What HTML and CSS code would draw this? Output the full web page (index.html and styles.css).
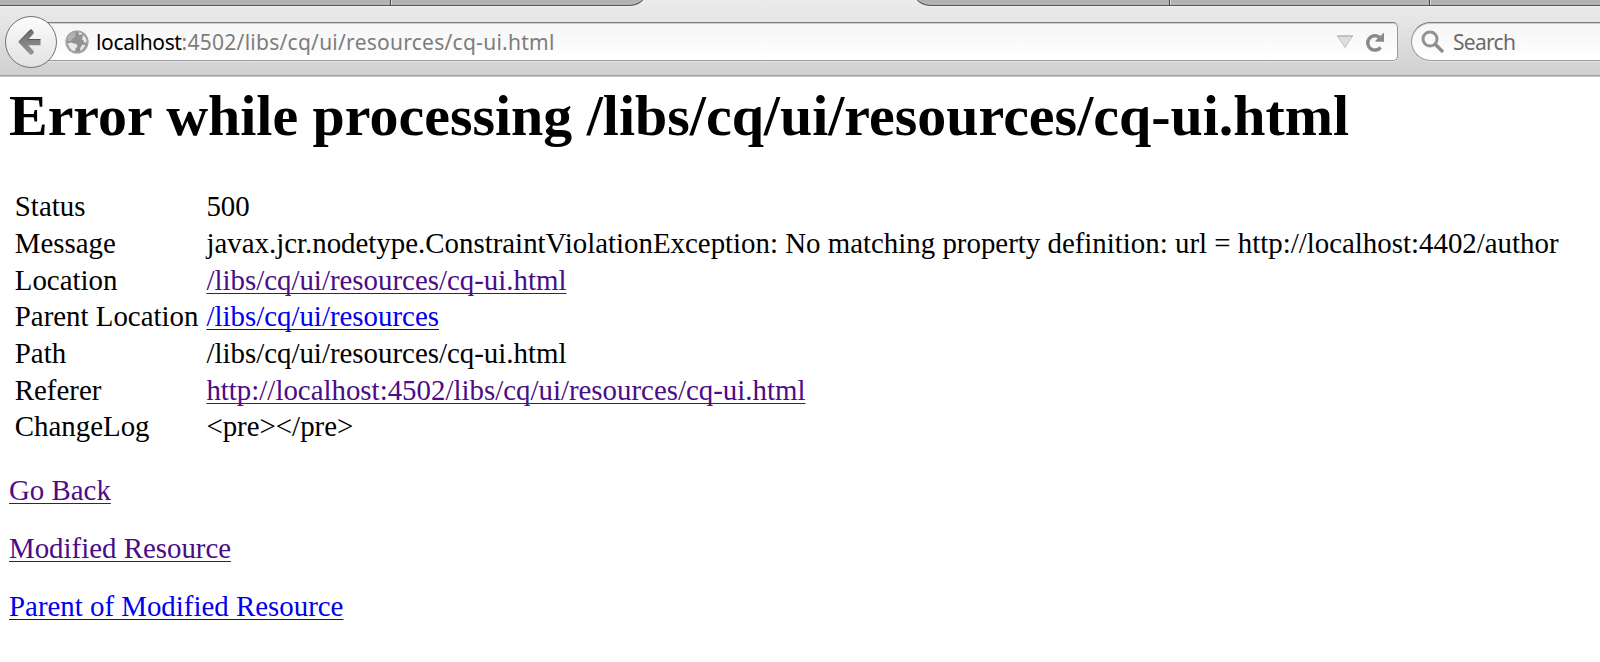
FILE: index.html
```html
<!DOCTYPE html>
<html>
<head>
  <meta charset="utf-8">
  <title>Error while processing /libs/cq/ui/resources/cq-ui.html</title>
  <link rel="stylesheet" href="styles.css">
</head>
<body>
  <div class="browser">
    <div class="tab-strip">
      <div class="tabs tabs-left">
        <div class="tab first"></div>
        <div class="tab"></div>
      </div>
      <div class="tabs tabs-right">
        <div class="tab second"></div>
        <div class="tab third"></div>
        <div class="tab"></div>
      </div>
    </div>
    <div class="toolbar">
      <div class="back">
        <svg width="52" height="52" viewBox="0 0 52 52">
          <defs>
            <linearGradient id="arrow" x1="0" y1="0" x2="0" y2="1">
              <stop offset="0" stop-color="#6c6c6c"/>
              <stop offset="1" stop-color="#969696"/>
            </linearGradient>
          </defs>
          <path d="M13.4 26.3 24.6 14.4Q26 13.100 27.500 14.4L28.300 15.200Q29.500 16.500 28.200 18L23.300 23.400H35.500V29.200H23.300L28.200 34.500Q29.500 36 28.300 37.200L27.500 38Q26 39.300 24.600 38Z" fill="url(#arrow)"/>
          <path d="M14 25.600 25 14.200Q26 13.400 27.200 14.300M23.300 23.500H35.500" fill="none" stroke="#555" stroke-width="1"/>
        </svg>
      </div>
      <div class="url-bar">
        <svg class="globe" width="24" height="24" viewBox="0 0 24 24">
          <circle cx="12" cy="12" r="11.500" fill="#929292"/>
          <circle cx="12" cy="12" r="10.600" fill="none" stroke="#a6a6a6" stroke-width="1.200"/>
          <path d="M2.500 8Q5 3 9.500 2L11 3.500 9.500 5.500 10.500 7 7.500 8.500 6 11 3 11.500Z" fill="#b2b2b2"/>
          <path d="M13.500 2.500 17 3 16.500 4.500 14.300 5ZM18 5 20.500 7.500 21.800 11 20 13.500 18.500 10.500 17 9.500ZM2.500 13.500 6 12.500 9 13.500 11.500 14 12.500 16.500 10.500 18.500 10.500 21 7 20.500 4.500 17.500ZM17.500 14.500 20.500 15 18 19 15 21 15.500 17.500Z" fill="#e9e9e9"/>
        </svg>
        <span class="url"><span class="host">localhost</span>:4502/libs/cq/ui/resources/cq-ui.html</span>
        <svg class="dropdown" width="18" height="14" viewBox="0 0 18 14">
          <path d="M1.500 1H16.500L9 12.500Z" fill="#dedede" stroke="#c4c4c4" stroke-width="1"/>
          <path d="M1 1H17" stroke="#aaa" stroke-width="1"/>
        </svg>
        <svg class="reload" width="20" height="20" viewBox="0 0 20 20">
          <path d="M14.500 5.300A7.200 7.200 0 1 0 15.600 15.400" fill="none" stroke="#8a8a8a" stroke-width="3.500"/>
          <path d="M19 0.500V9.700H10.500V8.500Z" fill="#8a8a8a"/>
        </svg>
      </div>
      <div class="search-bar">
        <svg width="24" height="24" viewBox="0 0 24 24">
          <circle cx="9" cy="9" r="7" fill="none" stroke="#929292" stroke-width="3"/>
          <path d="M14 14 22 22" stroke="#8c8c8c" stroke-width="3.400"/>
        </svg>
        <span class="search-text">Search</span>
      </div>
    </div>
  </div>

  <div class="content">
    <h1>Error while processing /libs/cq/ui/resources/cq-ui.html</h1>
    <table>
      <tr>
        <td class="label">Status</td>
        <td>500</td>
      </tr>
      <tr>
        <td class="label">Message</td>
        <td>javax.jcr.nodetype.ConstraintViolationException: No matching property definition: url = http://localhost:4402/author</td>
      </tr>
      <tr>
        <td class="label">Location</td>
        <td><a class="visited" href="#">/libs/cq/ui/resources/cq-ui.html</a></td>
      </tr>
      <tr>
        <td class="label">Parent Location</td>
        <td><a href="#">/libs/cq/ui/resources</a></td>
      </tr>
      <tr>
        <td class="label">Path</td>
        <td>/libs/cq/ui/resources/cq-ui.html</td>
      </tr>
      <tr>
        <td class="label">Referer</td>
        <td><a class="visited" href="#">http://localhost:4502/libs/cq/ui/resources/cq-ui.html</a></td>
      </tr>
      <tr>
        <td class="label">ChangeLog</td>
        <td>&lt;pre&gt;&lt;/pre&gt;</td>
      </tr>
    </table>
    <p><a class="visited" href="#">Go Back</a></p>
    <p><a class="visited" href="#">Modified Resource</a></p>
    <p><a href="#">Parent of Modified Resource</a></p>
  </div>
</body>
</html>
```
FILE: styles.css
```css
body {
  margin: 0;
  height: 662px;
  overflow: hidden;
  background-color: white;
  color: black;
  font-family: "Liberation Serif", "Times New Roman", serif;
  font-size: 28.88px;
}
.browser {
  box-sizing: border-box;
  height: 77px;
  background: linear-gradient(#ebebeb, #e4e4e4 25px, #d0d0d0 74px);
  border-bottom: 1px solid #c4c4c4;
  box-shadow: inset 0 -1px 0 #a2a2a2;
}
.tab-strip {
  display: flex;
  justify-content: space-between;
  align-items: flex-end;
  height: 7px;
  overflow: hidden;
}
.tabs {
  display: flex;
  box-sizing: border-box;
  height: 30px;
  background: #b3b3b3;
  border-bottom: 1px solid #555;
  box-shadow: 0 1px 0 #f4f4f4;
  margin-bottom: 1px;
  overflow: hidden;
}
.tabs-left {
  width: 645px;
  border-right: 1px solid #666;
  border-bottom-right-radius: 16px 11px;
}
.tabs-right {
  width: 685px;
  border-left: 1px solid #666;
  border-bottom-left-radius: 16px 11px;
}
.tab {
  flex: 1;
}
.first, .second, .third {
  box-sizing: border-box;
  flex: none;
  border-right: 1px solid #444;
  box-shadow: 1px 0 0 #d8d8d8;
}
.first {
  width: 391px;
}
.second {
  width: 254px;
}
.third {
  width: 260px;
}
.toolbar {
  display: flex;
  align-items: center;
  height: 69px;
  padding-left: 5px;
}
.back {
  box-sizing: border-box;
  display: flex;
  align-items: center;
  justify-content: center;
  width: 52px;
  height: 52px;
  border: 1px solid #727272;
  border-radius: 50%;
  background: linear-gradient(#fcfcfc, #e2e2e2);
  z-index: 1;
}
.back svg {
  flex: none;
}
.url-bar, .search-bar {
  box-sizing: border-box;
  display: flex;
  align-items: center;
  height: 39px;
  border: 1px solid #999;
  border-top-color: #7d7d7d;
  background: linear-gradient(#f5f5f5, #fff);
  box-shadow: inset 0 1px 0 #d0d0d0, 0 1px 0 #e6e6e6;
  font-family: "Noto Sans", sans-serif;
  font-size: 21px;
  line-height: 37px;
  color: #7d7d7d;
}
.url-bar {
  width: 1359px;
  margin-left: -18px;
  padding-left: 25px;
  padding-right: 12px;
  border-radius: 0 5px 5px 0;
}
.globe {
  margin-right: 7px;
}
.url {
  flex: 1;
  padding-top: 2px;
  line-height: 35px;
  letter-spacing: 0.26px;
  white-space: nowrap;
}
.host {
  color: black;
  letter-spacing: -0.35px;
}
.dropdown {
  margin-right: 11px;
}
.search-bar {
  flex: 1;
  margin-left: 13px;
  padding-left: 9px;
  border-right: none;
  border-radius: 20px 0 0 20px;
}
.search-text {
  margin-left: 8px;
  padding-top: 2px;
  line-height: 35px;
  letter-spacing: -0.7px;
  color: #6a6a6a;
}
.content {
  padding: 0 9px;
}
h1 {
  margin: 5px 0 39.400px;
  font-size: 57.95px;
  line-height: 67px;
  white-space: nowrap;
}
table {
  border-spacing: 0;
  margin-left: 4px;
  white-space: nowrap;
}
td {
  padding: 0 1.800px;
  line-height: 36.660px;
}
.label {
  width: 188px;
}
p {
  margin: 0;
  padding-top: 24px;
  line-height: 34.300px;
}
table + p {
  padding-top: 27.600px;
}
a {
  color: #0000ee;
  text-decoration: underline;
  text-decoration-thickness: 1.300px;
  text-underline-offset: 3px;
  text-decoration-skip-ink: none;
}
.visited {
  color: #4b0c86;
}
```
